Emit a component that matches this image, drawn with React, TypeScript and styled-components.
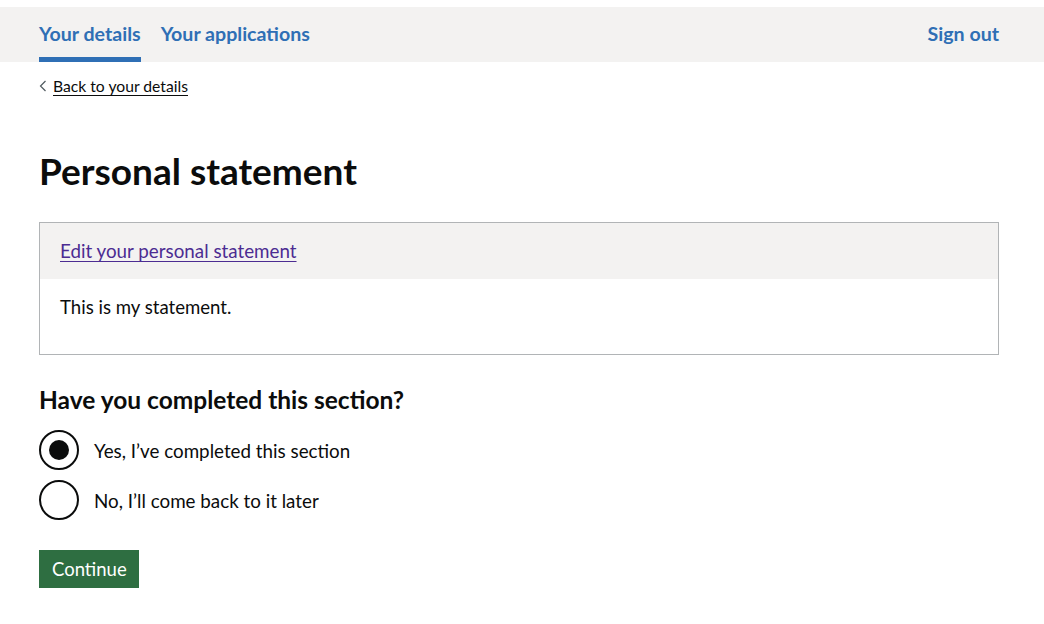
import React from "react";
import styled, { createGlobalStyle } from "styled-components";

const Global = createGlobalStyle`
  html, body { margin: 0; padding: 0; background: #ffffff; }
  body {
    font-family: Lato, "Liberation Sans", Arial, sans-serif;
    color: #0b0c0c;
    -webkit-font-smoothing: antialiased;
  }
  * { box-sizing: border-box; }
`;

const Page = styled.div`
  padding-top: 7px;
`;

const Header = styled.header`
  background: #f3f2f1;
  height: 55px;
`;

const HeaderInner = styled.nav`
  width: 960px;
  margin-left: 39px;
  height: 100%;
  display: flex;
  align-items: stretch;
`;

const NavList = styled.div`
  display: flex;
  gap: 20px;
  flex: 1;
`;

const NavLink = styled.a<{ $active?: boolean }>`
  display: flex;
  align-items: flex-start;
  padding-top: 15px;
  font-size: 19.6px;
  font-weight: 700;
  color: #2f6fb5;
  text-decoration: none;
  border-bottom: 5px solid ${(p) => (p.$active ? "#2f6fb5" : "transparent")};
`;

const Main = styled.main`
  width: 960px;
  margin-left: 39px;
`;

const BackLink = styled.a`
  display: inline-flex;
  align-items: center;
  gap: 6px;
  margin-top: 15px;
  font-size: 15.7px;
  color: #0b0c0c;
  text-decoration: none;
`;

const BackText = styled.span`
  text-decoration: underline;
  text-underline-offset: 3px;
  text-decoration-thickness: 1px;
`;

const Title = styled.h1`
  margin: 56px 0 0;
  font-size: 37px;
  line-height: 40px;
  font-weight: 700;
`;

const Card = styled.section`
  margin-top: 31px;
  border: 1px solid #b1b4b6;
`;

const CardHeader = styled.div`
  background: #f3f2f1;
  height: 56px;
  padding: 16px 20px 0;
`;

const CardLink = styled.a`
  font-size: 18.8px;
  color: #4c2c92;
  text-decoration: underline;
  text-underline-offset: 3px;
  text-decoration-thickness: 1px;
`;

const CardBody = styled.div`
  padding: 16px 20px 34px;
  font-size: 18.6px;
  line-height: 25px;
`;

const Fieldset = styled.fieldset`
  margin: 30px 0 0;
  padding: 0;
  border: 0;
`;

const Legend = styled.legend`
  padding: 0;
  font-size: 24.5px;
  line-height: 30px;
  font-weight: 700;
`;

const Options = styled.div`
  margin-top: 15px;
  display: flex;
  flex-direction: column;
  gap: 10px;
`;

const Option = styled.label`
  display: flex;
  align-items: center;
  gap: 15px;
  font-size: 18.8px;
`;

const Radio = styled.span<{ $checked?: boolean }>`
  position: relative;
  width: 40px;
  height: 40px;
  border: 2px solid #0b0c0c;
  border-radius: 50%;
  flex: none;
  &::after {
    content: "";
    position: absolute;
    left: 8px;
    top: 8px;
    width: 20px;
    height: 20px;
    border-radius: 50%;
    background: #0b0c0c;
    display: ${(p) => (p.$checked ? "block" : "none")};
  }
`;

const Button = styled.button`
  margin-top: 30px;
  display: inline-block;
  font-family: inherit;
  font-size: 18.5px;
  line-height: 25px;
  color: #ffffff;
  background: #2e6e41;
  border: 0;
  padding: 7px 12px 6px 13px;
  box-shadow: 0 2px 0 #173a22;
  height: 38px;
`;

const Chevron = () => (
  <svg width="8" height="12" viewBox="0 0 8 12" aria-hidden="true">
    <path d="M6.5 1 L1.5 6 L6.5 11" fill="none" stroke="#505a5f" strokeWidth="1.2" />
  </svg>
);

export default function App() {
  return (
    <Page>
      <Global />
      <Header>
        <HeaderInner>
          <NavList>
            <NavLink href="#" $active>Your details</NavLink>
            <NavLink href="#">Your applications</NavLink>
          </NavList>
          <NavLink href="#">Sign out</NavLink>
        </HeaderInner>
      </Header>
      <Main>
        <BackLink href="#">
          <Chevron />
          <BackText>Back to your details</BackText>
        </BackLink>
        <Title>Personal statement</Title>
        <Card>
          <CardHeader>
            <CardLink href="#">Edit your personal statement</CardLink>
          </CardHeader>
          <CardBody>This is my statement.</CardBody>
        </Card>
        <Fieldset>
          <Legend>Have you completed this section?</Legend>
          <Options>
            <Option>
              <Radio $checked />
              Yes, I’ve completed this section
            </Option>
            <Option>
              <Radio />
              No, I’ll come back to it later
            </Option>
          </Options>
        </Fieldset>
        <Button>Continue</Button>
      </Main>
    </Page>
  );
}
